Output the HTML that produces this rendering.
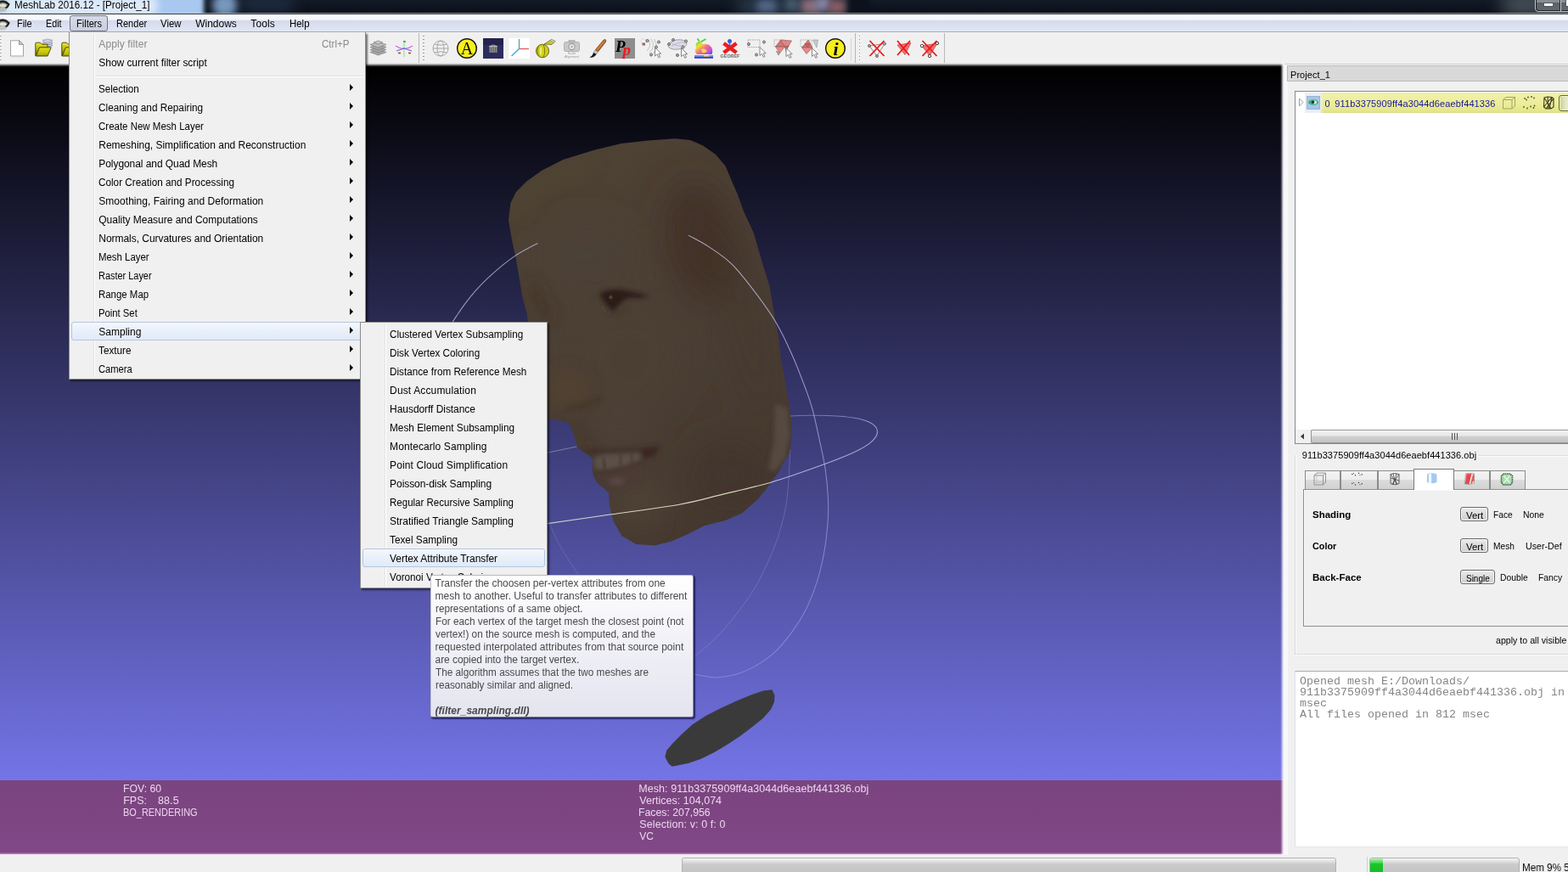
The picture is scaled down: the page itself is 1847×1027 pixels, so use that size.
<!DOCTYPE html>
<html lang="en">
<head>
<meta charset="utf-8">
<title>MeshLab 2016.12 - [Project_1]</title>
<style>
*{box-sizing:border-box;margin:0;padding:0}
html,body{width:1847px;height:1027px;overflow:hidden;background:#f0f0f0}
body{position:relative;font-family:"Liberation Sans",sans-serif;font-size:12px;color:#000;line-height:1}
.abs,.abs>*,.t,.p,#info>*,.menu>*,#tip>*{position:absolute}
.t{white-space:nowrap;transform-origin:0 0}
#title{left:0;top:0;width:1847px;height:16px;background:linear-gradient(#121a27,#0b1019);overflow:hidden}
#title .glow{left:-30px;top:-14px;width:270px;height:44px;background:#a8c8f0;filter:blur(2.5px)}
#title .glow2{left:2px;top:-6px;width:184px;height:26px;background:rgba(255,255,255,.62);filter:blur(5px);border-radius:12px}
#title .txt{left:16px;top:-2px;font-size:12px;line-height:14px;letter-spacing:-0.14px;color:#000}
#tline{left:0;top:15px;width:1847px;height:2px;background:linear-gradient(rgba(190,200,215,.62) 0,rgba(190,200,215,.62) 1px,#3a3e44 1px,#3a3e44 2px)}
#menubar{left:0;top:17px;width:1847px;height:21px;background:linear-gradient(#ffffff 0,#f9fafd 3px,#eff2fa 6.5px,#d5daec 7.5px,#dbe0f0 13px,#e1e6f4 20px);border-bottom:1px solid #a9abb5}
#menubar .t{top:0;height:20px;line-height:21px}
#mfil{left:82px;top:1px;width:45px;height:19px;border:1px solid #6e7482;border-radius:3px;background:linear-gradient(#d6dbe8,#c9cfdf)}
#toolbar{left:0;top:38px;width:1847px;height:38px;background:linear-gradient(#f8f8f8 0,#f0f0f0 1px)}
#gl{left:0;top:74px;width:1513px;height:934px;overflow:hidden;background:#000}
#info{left:0;top:845px;width:1513px;height:89px;background:linear-gradient(#7a4480,#7d4682 50%,#814888)}
#info .t{color:#e4dbe9;font-size:12.5px;line-height:14px}
#right{left:1510px;top:76px;width:337px;height:931px}
#status{left:0;top:1006px;width:1847px;height:21px}
.menu{background:#f0f0f0;border:1px solid #8c8c8c;box-shadow:2px 2px 2px rgba(0,0,0,.55)}
.menu .gut{left:28px;top:2px;bottom:2px;width:2px;border-left:1px solid #e2e3e3;border-right:1px solid #fff}
.menu .it{left:34px;height:22px;line-height:23px;white-space:nowrap}
.menu .ar{width:0;height:0;border-left:4.6px solid #000;border-top:4.3px solid transparent;border-bottom:4.3px solid transparent}
.menu .hl{height:22px;border:1px solid #b3c6e2;border-radius:3px;background:linear-gradient(#f4f7fc,#e9f0fa 50%,#e0eaf8)}
#tip{left:506.5px;top:677.3px;width:310px;height:168px;border:1px solid #fbfbfd;border-color:#b9b9c4 #8e8ea0 #77778c #c4c4d0;border-radius:3px;background:linear-gradient(#ffffff,#f4f4f9 35%,#e3e4ef);box-shadow:1.5px 1.5px 1.5px rgba(10,10,60,.7);color:#4a4a4a}
#tip .t{left:4px;line-height:15px;height:15px}
.b11{font-size:11px;line-height:13px;letter-spacing:.2px}
.mono{font-family:"Liberation Mono",monospace;font-size:13.33px;line-height:13px;color:#7a7a7a}
.tab{border:1px solid #8c8c8c;border-bottom:none;background:linear-gradient(#f3f3f3 0,#ededed 44%,#dcdcdc 47%,#d0d0d0 100%)}
.btn{border:1px solid #6a6a6a;border-radius:3px;background:linear-gradient(#ececec,#dadada 50%,#d0d0d0);box-shadow:inset 0 0 0 1px #f6f6f6}
.pb{border:1px solid #b2b2b2;border-radius:3px;background:linear-gradient(#f4f4f4 0,#dedede 4px,#cacaca 7px,#c4c4c4 100%)}
</style>
</head>
<body>
<div id="root" style="position:absolute;left:0;top:0;width:1847px;height:1027px;will-change:transform">
<div id="title" class="abs"><div class="glow"></div>
<div style="left:250px;top:-8px;width:30px;height:28px;border-radius:14px;background:#7d9fc6;filter:blur(5px);opacity:.95"></div>
<div style="left:285px;top:-6px;width:60px;height:20px;background:#1e2c40;filter:blur(8px)"></div>
<div style="left:870px;top:-4px;width:130px;height:22px;background:#2a3a4a;filter:blur(9px)"></div>
<div style="left:892px;top:0px;width:22px;height:14px;background:#566a8c;filter:blur(5px)"></div>
<div style="left:926px;top:-2px;width:14px;height:14px;background:#4a6074;filter:blur(5px)"></div>
<div style="left:944px;top:-2px;width:22px;height:18px;background:#8e6e7c;filter:blur(5px)"></div>
<div style="left:962px;top:-4px;width:16px;height:16px;background:#8c8eb2;filter:blur(5px)"></div>
<div style="left:976px;top:0px;width:20px;height:16px;background:#8e5e64;filter:blur(5px)"></div>
<div style="left:1000px;top:-10px;width:24px;height:40px;background:#0c121b;filter:blur(3px)"></div>
<div style="left:1770px;top:-10px;width:90px;height:30px;background:#454d56;filter:blur(10px)"></div>
<div class="glow2"></div>
<svg style="left:0;top:0" width="12" height="16" viewBox="0 0 12 16"><ellipse cx="3" cy="5.500" rx="7.500" ry="5.500" fill="#767a72"/><ellipse cx="3.500" cy="6.500" rx="4" ry="2.200" fill="#dde1d4"/><path d="M-2 3.500 Q4 -0.500 10.500 5 Q9 9 6 10" stroke="#1c1c1c" stroke-width="2" fill="none"/><ellipse cx="2" cy="11" rx="6" ry="2.500" fill="#b8bcb4"/></svg>
<div class="t" style="left:16.80px;top:-2px;font-size:12px;line-height:16px;transform:scaleX(0.9721);">MeshLab 2016.12 - [Project_1]</div>
<div style="left:1808px;top:-6px;width:50px;height:20px;border:1px solid #c8ccd2;border-radius:4px;background:#1a1e24"></div>
<div style="left:1810px;top:-6px;width:48px;height:18px;border-radius:3px;background:linear-gradient(#8a9098 0,#868c94 9px,#5a6068 9px,#62686f 100%)"></div>
<div style="left:1818px;top:3px;width:12px;height:5px;background:#fff;border:1px solid #50565c"></div>
<div style="left:1837px;top:-6px;width:2px;height:19px;background:linear-gradient(90deg,#2a2e34 0,#2a2e34 1px,#c8ccd2 1px)"></div>
<div style="left:1844px;top:-2px;width:6px;height:10px;background:#fff;border:1px solid #50565c"></div>
</div>
<div id="tline" class="abs"></div>
<div id="menubar" class="abs">
<svg style="left:0;top:0" width="12" height="20" viewBox="0 0 12 20"><ellipse cx="3" cy="10.500" rx="7.500" ry="5.500" fill="#80847c"/><ellipse cx="3.500" cy="11.500" rx="4" ry="2.200" fill="#e3e6dc"/><path d="M-2 8.500 Q4 4.500 10.500 10 Q9 14 6 15" stroke="#1c1c1c" stroke-width="2" fill="none"/><ellipse cx="2" cy="16" rx="6" ry="2.500" fill="#c4c8c2"/></svg>
<div id="mfil"></div>
<div class="t" style="left:19.50px;top:3px;font-size:12px;line-height:16px;transform:scaleX(0.9104);">File</div><div class="t" style="left:53.60px;top:3px;font-size:12px;line-height:16px;transform:scaleX(0.8996);">Edit</div><div class="t" style="left:89.70px;top:3px;font-size:12px;line-height:16px;transform:scaleX(0.9184);">Filters</div><div class="t" style="left:136.70px;top:3px;font-size:12px;line-height:16px;transform:scaleX(0.9197);">Render</div><div class="t" style="left:189.20px;top:3px;font-size:12px;line-height:16px;transform:scaleX(0.9492);">View</div><div class="t" style="left:230.30px;top:3px;font-size:12px;line-height:16px;letter-spacing:-0.030px;">Windows</div><div class="t" style="left:295.30px;top:3px;font-size:12px;line-height:16px;letter-spacing:0.122px;">Tools</div><div class="t" style="left:340.80px;top:3px;font-size:12px;line-height:16px;transform:scaleX(0.9518);">Help</div>
</div>
<div id="toolbar" class="abs">
<svg class="p" style="left:0;top:0" width="1847" height="40" viewBox="0 38 1847 40" font-family="'Liberation Serif',serif">
<defs>
<pattern id="hd" x="0" y="42" width="3" height="4" patternUnits="userSpaceOnUse"><rect x="0" y="0" width="2" height="1.300" fill="#9c9c9c"/><rect x="0" y="1.300" width="2" height="1" fill="#fdfdfd"/></pattern>
<linearGradient id="fol" x1="0" y1="0" x2="0" y2="1"><stop offset="0" stop-color="#ecec28"/><stop offset=".5" stop-color="#b8b810"/><stop offset="1" stop-color="#5e5e06"/></linearGradient>
<linearGradient id="rb" x1="0" y1="0" x2="1" y2="1"><stop offset="0" stop-color="#3ad23a"/><stop offset=".3" stop-color="#f0e030"/><stop offset=".55" stop-color="#f06a9a"/><stop offset=".8" stop-color="#c050e0"/><stop offset="1" stop-color="#4050e0"/></linearGradient>
<g id="cur"><path d="M0 0 L0 10 L2.5 7.800 L4.300 11.800 L6 11 L4.200 7.200 L7.200 7.200 Z" fill="#fff" stroke="#777" stroke-width=".9"/></g>
<g id="pt"><circle r="1.500" fill="#b9b9b9" stroke="#555" stroke-width=".9"/></g>
<linearGradient id="fol2" x1="0" y1="0" x2="0" y2="1"><stop offset="0" stop-color="#dede1a"/><stop offset=".6" stop-color="#c4c40e"/><stop offset="1" stop-color="#a2a206"/></linearGradient></defs>
<rect x="0" y="42" width="1.500" height="30" fill="url(#hd)"/>
<!-- new doc -->
<path d="M12.500 47.500 H22.500 L27.500 52.500 V66 H12.500 Z" fill="#fefefe" stroke="#a4a4a4"/><path d="M13 48.200 H22" stroke="#dcdcdc" stroke-width="1.200"/><path d="M22.500 47.500 V52.500 H27.500 Z" fill="#c4c4c4" stroke="#8a8a8a" stroke-width=".8"/><path d="M13 66.800 H28" stroke="#d0d0d0"/>
<!-- folder 1 -->
<g><path d="M50 47.500 l6 -1.500 l6 1.500 l-6 1.600 Z" fill="#dcdce8" stroke="#8a8aa2" stroke-width=".7"/><path d="M50 49.500 l6 1.600 l6 -1.600 M50 51.500 l6 1.600 l6 -1.600 M50 53.500 l6 1.600 l6 -1.600" fill="none" stroke="#7c7c98" stroke-width="1"/><path d="M41.800 51.200 Q41.800 50.200 43 50.200 H47.500 L49.500 52.200 H56 V65.700 H41.800 Z" fill="url(#fol)" stroke="#3e3e04" stroke-width=".9"/><path d="M46.500 55.800 H60.300 L56 65.900 H42.300 Z" fill="url(#fol2)" stroke="#3e3e04" stroke-width=".9"/></g>
<g><path d="M72.800 51.200 Q72.800 50.200 74 50.200 H78.500 L80.500 52.200 H87 V65.700 H72.800 Z" fill="url(#fol)" stroke="#3e3e04" stroke-width=".9"/><path d="M77.500 55.800 H91.300 L87 65.900 H73.300 Z" fill="url(#fol2)" stroke="#3e3e04" stroke-width=".9"/></g>
<!-- layers -->
<g fill="#a6a6a6" stroke="#7e7e7e" stroke-width=".7"><path d="M436 61.500 l9.500 -3 l9.500 3 l-9.500 3.500 Z"/><path d="M436 58.500 l9.500 -3 l9.500 3 l-9.500 3.500 Z"/><path d="M436 55.500 l9.500 -3 l9.500 3 l-9.500 3.500 Z"/><path d="M436 52.500 l9.500 -3 l9.500 3 l-9.500 3.500 Z" fill="#bdbdbd"/><path d="M440 50 l5.500 -2 l5.500 2 l-5.500 2 Z" fill="#c8c8c8"/></g>
<!-- axis small -->
<g fill="none" stroke-width="1.200"><path d="M476 47.500 V67" stroke="#9be09b"/><path d="M466 54 Q476 61 486 54" stroke="#d06ad0"/><path d="M467 60 L476 57 L485 60" stroke="#6a6ae0"/><path d="M469 62.500 h3 M481 62.500 h3" stroke="#c03030" stroke-width="1.600"/><path d="M475 49 h3" stroke="#2a7a2a"/></g>
<path d="M493.500 39 V76" stroke="#b8b8b8"/>
<rect x="498" y="42" width="2" height="30" fill="url(#hd)"/>
<!-- globe -->
<g fill="none" stroke="#a8a8a8" stroke-width="1"><circle cx="519" cy="57" r="9"/><ellipse cx="519" cy="57" rx="4" ry="9"/><path d="M510 57 H528 M511.500 52 Q519 54.500 526.500 52 M511.500 62 Q519 59.500 526.500 62"/></g>
<!-- A -->
<circle cx="550" cy="57" r="11.300" fill="#f6ee1e" stroke="#111" stroke-width="1.400"/><text x="550" y="64" font-size="20" text-anchor="middle" fill="#000">A</text>
<!-- dark square -->
<rect x="569" y="45" width="24" height="24" fill="#2d2c5e"/><rect x="569" y="45" width="24" height="8" fill="#24234e"/><path d="M576.500 62 V54.500 Q581 50.500 585.500 54.500 V62 Z" fill="#8c8c86"/><path d="M578.500 62 V56 M581 62 V55 M583.500 62 V56" stroke="#5a5a58" stroke-width=".9"/><path d="M576 54.500 H586" stroke="#b4b4ac" stroke-width="1.200"/>
<!-- axes -->
<rect x="599.500" y="45" width="24.500" height="24" fill="#fff"/><path d="M611.500 57.500 V46" stroke="#46b478" stroke-width="1.300"/><path d="M611.500 57.500 H623" stroke="#e0646e" stroke-width="1.500"/><path d="M611.500 57.500 L602.500 66" stroke="#4aa4d8" stroke-width="1.500"/>
<!-- tape -->
<g><path d="M641 52 L649.500 46.500 L654 48.500 L650 52.500 Z" fill="#c8c832" stroke="#5c5c10" stroke-width=".7"/><path d="M649.500 46.500 L654 48.500 L653.200 50 L648.500 48 Z" fill="#e8e8e8" stroke="#777" stroke-width=".5"/><ellipse cx="639" cy="60" rx="7.500" ry="7.800" fill="#d2d21e" stroke="#56560c" stroke-width=".9"/><path d="M635 53.500 Q631 60 635 66.500 M640 52.500 Q643.500 60 640 67.500" fill="none" stroke="#7a7a10" stroke-width="1"/><path d="M637 56 V64" stroke="#f4f48c" stroke-width="1.600"/></g>
<!-- camera -->
<g><rect x="664.500" y="49.500" width="18" height="11" rx="2" fill="#c9c9c9" stroke="#a2a2a2" stroke-width=".8"/><rect x="670" y="47.500" width="7" height="2.500" fill="#bcbcbc" stroke="#a2a2a2" stroke-width=".6"/><circle cx="673.500" cy="55" r="3.600" fill="#ececec" stroke="#9a9a9a" stroke-width="1.100"/><circle cx="673.500" cy="55" r="1.500" fill="#b5b5b5"/><text x="673.500" y="64" font-family="'Liberation Sans',sans-serif" font-size="3.800" text-anchor="middle" fill="#999">Scale</text><text x="673.500" y="68" font-family="'Liberation Sans',sans-serif" font-size="3.800" text-anchor="middle" fill="#999">Alignment</text></g>
<!-- brush -->
<g><path d="M713 46.500 Q714.500 47.500 713.500 49.500 L704.500 61 L701 59 L710.500 47.500 Q712 46 713 46.500 Z" fill="#b0682c" stroke="#6e3c14" stroke-width=".6"/><path d="M701 59 L704.500 61 L702.500 64 L699 62 Z" fill="#c4c4c4" stroke="#777" stroke-width=".5"/><path d="M699 62 L702.500 64 Q699.500 68.500 694.500 67.500 Q698 66 699 62 Z" fill="#161616"/><path d="M711.500 48.500 L703.500 58.500" stroke="#e0a060" stroke-width=".9"/></g>
<!-- Pp -->
<rect x="724" y="45" width="24" height="24" fill="#8e8e8e"/><text x="725" y="61" font-size="19" font-weight="bold" font-style="italic" fill="#000">P</text><text x="733.500" y="65" font-size="19" font-weight="bold" font-style="italic" fill="#e61c1c">p</text>
<!-- select points -->
<g fill="none" stroke="#bcbcbc" stroke-width=".9"><path d="M763 46 Q769 52 762 60"/><path d="M766.500 45.500 Q773.500 53 765 62.500"/><path d="M770.500 46 Q777 54.500 768 65"/></g>
<circle cx="758" cy="48.500" r="2.800" fill="#f4f4f4" stroke="#c8c8c8" stroke-width=".6"/><rect x="756.500" y="50.500" width="3.500" height="3" fill="#b06060"/><use href="#pt" x="762.500" y="48"/><use href="#pt" x="776" y="49.500"/><use href="#pt" x="773" y="55.500"/><use href="#pt" x="767" y="64.500"/><use href="#cur" x="771.500" y="56"/>
<!-- ellipse select -->
<ellipse cx="798" cy="52.500" rx="11" ry="5.600" fill="#dcdcee" stroke="#9a9a9a" stroke-width=".9" transform="rotate(-8 798 52.500)"/><path d="M790 50 Q798 56 806 53 M791 55 Q798 49 807 50" fill="none" stroke="#aaa" stroke-width=".7"/><use href="#pt" x="788" y="52"/><use href="#pt" x="793" y="47"/><use href="#pt" x="808" y="48.500"/><use href="#pt" x="804.500" y="55.500"/><use href="#pt" x="798" y="65"/><use href="#cur" x="802.500" y="56.500"/>
<!-- bunny -->
<g><path d="M821 50 L825.500 48 L828 52 Q834 50.500 837.500 55 Q840.500 59 838.500 64 H820.500 Q817.500 60 820 56 Q819 52 821 50 Z" fill="url(#rb)"/><path d="M823.500 48.500 L821.500 45.500 M826 49 L831.500 46" stroke="#3ad23a" stroke-width="1.600"/><path d="M826 58 Q830 56 833 60 Q831 63 827 62" fill="#f4e430" opacity=".9"/><rect x="818" y="65" width="22" height="1.600" fill="#28b4c8"/><rect x="818" y="66.600" width="22" height="2.200" fill="#3838d8"/><rect x="829" y="65" width="6" height="1.600" fill="#f0d020"/></g>
<!-- georef -->
<g><path d="M852.500 51 L867.500 62 M867.500 51 L852.500 62" stroke="#ee1c1c" stroke-width="4.600"/><circle cx="859.500" cy="48.500" r="2.500" fill="#3a5ad8"/><path d="M859.500 50.500 V55" stroke="#3a5ad8" stroke-width="1.600"/><text x="860" y="68.300" font-family="'Liberation Sans',sans-serif" font-size="5.400" font-weight="bold" text-anchor="middle" fill="#666">GEOREF</text></g>
<!-- rect select -->
<rect x="881" y="47" width="14" height="8.500" fill="none" stroke="#8c8c8c" stroke-width=".9" stroke-dasharray="1.300 1.300"/><use href="#pt" x="882" y="52"/><use href="#pt" x="900" y="49.500"/><use href="#pt" x="891" y="64.500"/><use href="#cur" x="895" y="55.500"/>
<!-- tri select 1 -->
<g stroke="#8c5050" stroke-width=".6"><path d="M913.500 55 L919.500 47 L924.500 55 Z" fill="#e46e6e"/><path d="M919.500 47 L932.500 48 L929 54 L924.500 55 Z" fill="#e88484"/><path d="M913.500 55 L924.500 55 L918.500 62.500 Z" fill="#e88a8a"/><path d="M924.500 55 L929 54 L926 61 Z" fill="#d45c5c"/><path d="M914.500 60 L918.500 62.500 L917 65 Z" fill="#a8b8b8"/></g><rect x="912" y="47" width="13" height="8" fill="none" stroke="#8c8c8c" stroke-width=".8" stroke-dasharray="1.300 1.300"/><use href="#cur" x="926" y="56.500"/>
<!-- tri select 2 -->
<g stroke="#8c5050" stroke-width=".6"><path d="M944.500 56 L952 47 L957 56 Z" fill="#e46e6e"/><path d="M944.500 56 L957 56 L950 63.500 Z" fill="#e88a8a"/><path d="M948.200 51.500 L954.500 51.500 L951 56 Z" fill="#d45c5c"/><path d="M957.500 47 L963.500 47 L962 56 Z" fill="#c4cccc" stroke="#8a9a9a"/></g><rect x="943" y="47" width="13" height="8" fill="none" stroke="#8c8c8c" stroke-width=".8" stroke-dasharray="1.300 1.300"/><use href="#cur" x="956.500" y="56.500"/>
<!-- i -->
<circle cx="984" cy="57" r="11.300" fill="#f6ee1e" stroke="#111" stroke-width="1.400"/><text x="984.500" y="64.500" font-size="22" font-weight="bold" font-style="italic" text-anchor="middle" fill="#000">i</text>
<path d="M1002.500 45 V71" stroke="#d4d4d4"/><path d="M1007.500 39 V76" stroke="#b8b8b8"/>
<rect x="1012" y="42" width="2" height="30" fill="url(#hd)"/>
<!-- delete icons -->
<g><path d="M1024 54 L1033 66 L1042 51.500 Z" fill="none" stroke="#8a6a6a" stroke-width=".8"/><use href="#pt" x="1024" y="54"/><use href="#pt" x="1033" y="66"/><use href="#pt" x="1042" y="51.500"/><path d="M1024.500 48 L1041.500 66 M1041.500 48 L1024.500 66" stroke="#ee1414" stroke-width="1.800"/></g>
<g><path d="M1057 53 L1073 50.500 L1066 64.500 Z" fill="#f07070" stroke="#b44" stroke-width=".7"/><path d="M1057 48 L1071 65 M1072 48 L1057 65" stroke="#ee1414" stroke-width="1.800"/></g>
<g><path d="M1086 54 L1104 51 L1095 66 Z" fill="#f07070" stroke="#b44" stroke-width=".7"/><circle cx="1086" cy="54" r="1.700" fill="#fff" stroke="#333" stroke-width=".9"/><circle cx="1104" cy="51" r="1.700" fill="#fff" stroke="#333" stroke-width=".9"/><circle cx="1095" cy="66" r="1.700" fill="#fff" stroke="#333" stroke-width=".9"/><path d="M1086.500 48 L1103.500 66 M1103.500 48 L1086.500 66" stroke="#ee1414" stroke-width="1.800"/></g>
<path d="M1112.500 39 V76" stroke="#b8b8b8"/>
</svg>

</div>
<div id="gl" class="abs">
<svg style="left:0;top:-74px" width="1513" height="1083" viewBox="0 0 1513 1083">
<defs>
<linearGradient id="bg" x1="0" y1="77" x2="0" y2="1006" gradientUnits="userSpaceOnUse"><stop offset="0" stop-color="#000000"/><stop offset="1" stop-color="#8080ff"/></linearGradient>
<linearGradient id="fg" x1="620" y1="200" x2="900" y2="600" gradientUnits="userSpaceOnUse"><stop offset="0" stop-color="#4e4234"/><stop offset=".5" stop-color="#4b3f35"/><stop offset="1" stop-color="#453930"/></linearGradient>
<clipPath id="fc"><path id="fp" d="M599 259 L601.5 239 L608 226 L620.5 213.5 L638 201 L663.5 188 L699 177 L732 169 L767 165.3 L795 163.3 L813 165 L828 171.6 L843 182 L854.7 195.7 L861 211 L868.6 228.6 L876 249 L887.6 274 L896.5 304.5 L906.6 337.5 L911.6 368 L917.6 400 L920 424.3 L924.9 448.7 L929.7 477.9 L932.2 497.4 L931 531.5 L922.4 546.1 L917.6 555.8 L907.8 568 L903 575.3 L893.2 587.5 L873.7 604.5 L854.3 613 L829.9 619.1 L810.4 628.9 L791 637.4 L771.5 642.3 L749.6 641 L732.5 631.3 L722.8 614.3 L717.9 594.8 L717.1 580.2 L711.7 575.5 L703.9 569.3 L699.2 561.5 L697.6 552.1 L698.4 542.8 L696 538.1 L686.7 531.9 L680.5 527.2 L678.2 519.4 L673.5 505.4 L669.6 497.6 L645.5 493 L630 485 L622 430 L624 395 L620.5 368 L615.4 350 L611.6 327.3 L607.8 304.5 L602.8 281.8 Z"/></clipPath>
<filter id="b8" x="-50%" y="-50%" width="200%" height="200%"><feGaussianBlur stdDeviation="8"/></filter>
<filter id="b20" x="-50%" y="-50%" width="200%" height="200%"><feGaussianBlur stdDeviation="20"/></filter>
<filter id="b3" x="-50%" y="-50%" width="200%" height="200%"><feGaussianBlur stdDeviation="2.5"/></filter>
<filter id="b1" x="-50%" y="-50%" width="200%" height="200%"><feGaussianBlur stdDeviation="1"/></filter>
</defs>
<rect x="0" y="70" width="1513" height="940" fill="url(#bg)"/>
<!--TRACKBACK-->
<g clip-path="url(#fc)">
<rect x="580" y="150" width="380" height="520" fill="url(#fg)"/>
<g filter="url(#b20)">
<ellipse cx="826" cy="285" rx="42" ry="75" fill="#3f3026" opacity=".85" transform="rotate(-12 826 285)"/>
<ellipse cx="880" cy="380" rx="26" ry="120" fill="#42352b" opacity=".6" transform="rotate(-10 880 380)"/>
<ellipse cx="740" cy="420" rx="70" ry="70" fill="#4b3e35" opacity=".7"/>
<ellipse cx="690" cy="300" rx="60" ry="40" fill="#4c4036" opacity=".6"/>
<ellipse cx="860" cy="560" rx="50" ry="45" fill="#41342b" opacity=".8"/>
<ellipse cx="770" cy="628" rx="50" ry="14" fill="#41352b" opacity=".7"/>
<ellipse cx="752" cy="596" rx="30" ry="26" fill="#54483b" opacity=".75"/>
<ellipse cx="730" cy="505" rx="34" ry="20" fill="#51453a" opacity=".6"/>
</g>
<g filter="url(#b8)">
<ellipse cx="668" cy="458" rx="26" ry="24" fill="#514130" opacity=".8"/>
<path d="M600 240 L615 215 L660 192 L700 180 L700 200 L640 225 L615 260 Z" fill="#4e4233" opacity=".6"/>
<path d="M640 498 L672 500 L690 530 L700 545 L690 520 L650 505 Z" fill="#3c3026" opacity=".5"/>
<path d="M628 330 Q640 350 652 372 L640 378 Q630 355 622 335 Z" fill="#3e2f25" opacity=".7"/>
</g>
<g filter="url(#b3)">
<path d="M913 476 L927 480 L930.500 512 L925 540 L912 556 L905 552 L912 520 Z" fill="#574b42" opacity=".95"/>
<path d="M668 482 Q690 478 707 470" stroke="#3e3025" stroke-width="4" fill="none" opacity=".7"/>
<path d="M706 346 Q718 339 733 341.500 Q748 343.500 764 349 L756 351 Q744 350 736 352 L722 367 L715 360 L707 349 Z" fill="#2a1b15" opacity=".9"/>
<ellipse cx="726" cy="351" rx="10" ry="7" fill="#2a1c17" opacity=".85"/>
<path d="M718 366 Q728 372 740 362" stroke="#3d2f2c" stroke-width="4" fill="none" opacity=".5"/>
<path d="M688 531 Q730 533 777 527" stroke="#3c2a24" stroke-width="3.500" fill="none" opacity=".9"/>
<path d="M699 540 L710 535.500 L752 533.500 L756 541 L735 549 L712 553.500 L701 553 Z" fill="#5b4f46"/>
<path d="M756 528 L776 527 L772 537 L757 541 Z" fill="#3c2523"/>
<path d="M700 555.500 Q722 556 757 543" stroke="#3f2d29" stroke-width="2.500" fill="none"/>
<path d="M702 559 L735 553 L756 546 L752 566 L730 577 L714 577 Z" fill="#4c3a36"/>
<ellipse cx="727" cy="567" rx="10" ry="4.500" fill="#564742"/>
</g>
<g filter="url(#b1)">
<circle cx="719.500" cy="350" r="1.600" fill="#7e7066"/>
<path d="M709.500 360 L714 368" stroke="#5a4c42" stroke-width="1.200"/>
<path d="M710.500 539 Q713 546 712 553 M731 535 V548 M744 534 V545" stroke="#3e302b" stroke-width="1.300" opacity=".8"/>
</g>

</g>
<defs><linearGradient id="bgr" x1="0" y1="280" x2="0" y2="800" gradientUnits="userSpaceOnUse"><stop offset="0" stop-color="#cdc4e0" stop-opacity=".8"/><stop offset=".2" stop-color="#c4bce4" stop-opacity=".8"/><stop offset=".35" stop-color="#b4b0e4" stop-opacity=".75"/><stop offset=".6" stop-color="#b4b0ea" stop-opacity=".6"/><stop offset="1" stop-color="#b8b4ee" stop-opacity=".4"/></linearGradient><linearGradient id="cg" x1="640" y1="0" x2="1034" y2="0" gradientUnits="userSpaceOnUse"><stop offset="0" stop-color="#d8dcdc" stop-opacity=".85"/><stop offset=".18" stop-color="#e6e8cc" stop-opacity=".9"/><stop offset=".66" stop-color="#e6e8cc" stop-opacity=".9"/><stop offset=".72" stop-color="#c4c4ee" stop-opacity=".85"/><stop offset="1" stop-color="#b8b8ea" stop-opacity=".8"/></linearGradient><linearGradient id="cg2" x1="1034" y1="0" x2="931" y2="0" gradientUnits="userSpaceOnUse"><stop offset="0" stop-color="#b8b8ea" stop-opacity=".8"/><stop offset=".25" stop-color="#a4a4dc" stop-opacity=".7"/><stop offset="1" stop-color="#9494cc" stop-opacity=".6"/></linearGradient></defs>
<g fill="none" stroke-linecap="round">
<path d="M633.1 286.7 C631.0 287.8 625.1 290.7 620.6 293.2 C616.1 295.7 611.1 298.4 606.3 301.6 C601.5 304.8 597.2 308.0 592.0 312.3 C586.8 316.6 580.3 322.1 575.0 327.2 C569.7 332.3 564.6 337.5 560.0 342.7 C555.4 347.9 551.2 353.2 547.5 358.1 C543.8 363.1 540.5 368.1 537.6 372.4 C534.7 376.7 531.3 382.1 530.0 384.0" stroke="#b9acd0" stroke-width="1.05" opacity=".85"/>
<path d="M811.4 277.4 C815.2 279.6 826.1 284.8 834.5 290.4 C842.9 296.0 852.7 302.0 861.8 310.9 C870.9 319.8 880.4 332.2 889.0 343.6 C897.6 355.0 906.3 366.7 913.6 379.0 C920.9 391.3 926.8 404.0 932.7 417.2 C938.6 430.4 945.0 447.2 949.0 458.0 C953.0 468.8 954.2 471.7 957.0 482.0 C959.8 492.3 963.1 507.9 965.6 519.7 C968.1 531.5 970.6 541.2 972.2 552.8 C973.9 564.4 975.1 578.3 975.5 589.3 C975.9 600.3 975.6 608.5 974.8 619.0 C974.0 629.5 972.6 641.2 970.5 652.2 C968.4 663.2 965.9 674.3 962.3 685.3 C958.7 696.3 954.0 708.5 949.0 718.4 C944.0 728.3 938.6 736.6 932.5 744.9 C926.4 753.2 919.8 761.5 912.6 768.1 C905.4 774.7 897.1 780.2 889.4 784.6 C881.7 789.0 873.9 792.4 866.2 794.6 C858.5 796.8 850.7 797.9 843.0 797.9 C835.3 797.9 827.1 796.1 819.9 794.6 C812.7 793.1 803.3 789.9 800.0 789.0" stroke="url(#bgr)" stroke-width="1.05"/>
<path d="M640.0 617.3 C641.1 617.1 633.7 618.3 646.8 616.4 C659.9 614.5 692.9 609.7 718.4 606.0 C743.9 602.3 778.1 598.1 800.0 594.2 C821.9 590.3 831.5 587.0 849.7 582.6 C867.9 578.2 888.9 573.8 909.3 567.7 C929.7 561.6 956.2 552.0 972.2 546.2 C988.2 540.4 996.5 537.1 1005.3 533.0 C1014.1 528.9 1020.5 525.3 1025.2 521.4 C1029.9 517.5 1032.9 513.4 1033.4 509.8" stroke="url(#cg)" stroke-width="1.1"/>
<path d="M1033.4 509.8 C1034.0 506.2 1032.1 502.7 1028.5 499.9 C1024.9 497.1 1019.1 494.9 1011.9 493.2 C1004.7 491.5 994.8 490.5 985.4 489.9 C976.0 489.2 964.6 489.3 955.6 489.3 C946.6 489.3 935.5 489.8 931.5 489.9" stroke="url(#cg2)" stroke-width="1.05"/>
<path d="M644.0 533.4 C646.7 532.8 654.2 531.2 660.0 530.0 C665.8 528.8 675.8 526.7 679.0 526.0" stroke="#c8cce0" stroke-width="1" opacity=".45"/>
<path d="M930.8 529.7 C930.5 535.2 929.9 551.8 929.1 562.8 C928.3 573.8 927.7 584.9 925.8 595.9 C923.9 606.9 920.8 618.5 917.5 629.0 C914.2 639.5 910.7 648.3 906.0 658.8 C901.3 669.3 896.0 680.9 889.4 691.9 C882.8 702.9 873.9 715.1 866.2 725.0 C858.5 734.9 850.7 743.8 843.0 751.5 C835.3 759.2 827.1 765.6 819.9 771.4 C812.7 777.1 803.3 783.6 800.0 786.0" stroke="#b0acd8" stroke-width="1" opacity=".3"/>
<path d="M643.0 610.0 C643.6 611.0 644.0 610.4 646.8 616.0 C649.6 621.6 654.9 634.4 660.0 643.6 C665.1 652.8 672.5 663.6 677.5 671.0 C682.5 678.4 687.9 685.2 690.0 688.0" stroke="#b0acd8" stroke-width="1" opacity=".25"/>
</g>

<path d="M783.4 891.3 L785.3 883.7 L793 874.8 L803 864.7 L815.7 853.3 L831 843.2 L848.6 834.3 L867.6 825.4 L886.6 817.8 L899.2 813.4 L909.4 812.2 L912.5 819.1 L912 826.7 L908 835.6 L899 845.7 L886.6 855.8 L871.4 867.2 L856.2 877.3 L841 886.2 L825.8 893.8 L810.6 898.9 L798 901.4 L791.6 902.7 L787.2 898.9 Z" fill="#3b3a3b"/>
</svg>
<div id="info">
<div class="t" style="left:145.22px;top:2px;font-size:12.5px;line-height:16px;transform:scaleX(0.9772);color:#ecd6ee">FOV: 60</div><div class="t" style="left:145.20px;top:16px;font-size:12.5px;line-height:16px;color:#ecd6ee">FPS:</div><div class="t" style="left:186.00px;top:16px;font-size:12.5px;line-height:16px;letter-spacing:0.108px;color:#ecd6ee">88.5</div><div class="t" style="left:145.32px;top:30px;font-size:12.5px;line-height:16px;transform:scaleX(0.8759);color:#ecd6ee">BO_RENDERING</div><div class="t" style="left:752.30px;top:2px;font-size:12.5px;line-height:16px;letter-spacing:0.062px;color:#ecd6ee">Mesh: 911b3375909ff4a3044d6eaebf441336.obj</div><div class="t" style="left:753.30px;top:16px;font-size:12.5px;line-height:16px;letter-spacing:0.010px;color:#ecd6ee">Vertices: 104,074</div><div class="t" style="left:752.32px;top:30px;font-size:12.5px;line-height:16px;transform:scaleX(0.9822);color:#ecd6ee">Faces: 207,956</div><div class="t" style="left:753.30px;top:44px;font-size:12.5px;line-height:16px;letter-spacing:0.094px;color:#ecd6ee">Selection: v: 0 f: 0</div><div class="t" style="left:753.30px;top:58px;font-size:12px;line-height:16px;color:#ecd6ee">VC</div>
</div>
<div id="edges" style="left:0;top:0;width:1513px;height:934px">
<div class="p" style="left:0;top:0;width:1513px;height:5px;background:linear-gradient(#f0f0f0 0,rgba(240,240,240,.96) .5px,rgba(240,240,240,.8) 1.5px,rgba(240,240,240,.45) 2.7px,rgba(240,240,240,.12) 4px,rgba(240,240,240,0) 5px)"></div>
<div class="p" style="left:0;top:930px;width:1513px;height:4px;background:linear-gradient(rgba(200,170,200,0) 0,rgba(215,190,215,.5) 1.5px,#f3e9f3 2.6px,#f0f0f0 3.6px)"></div>
<div class="p" style="left:1507.5px;top:0;width:5.5px;height:934px;background:linear-gradient(90deg,rgba(244,244,250,0) 0,rgba(244,244,250,.15) 1px,rgba(244,244,250,.6) 2.4px,#f6f6fa 4px,#f6f6f6 5.5px)"></div>
</div>
</div>
<div id="right" class="abs">
<div class="p" id="dockline" style="left:3px;top:-1px;width:334px;height:2px;background:linear-gradient(#c9c9c9 0,#c9c9c9 1px,#fbfbfb 1px)"></div>
<div class="p" style="left:2.500px;top:1px;width:4px;height:930px;background:#f8f8f8"></div>
<div class="p" style="left:15px;top:460px;width:2px;height:235px;background:linear-gradient(90deg,#d8d8d8 0,#d8d8d8 1px,#fcfcfc 1px)"></div>
<div class="p" style="left:231px;top:459.5px;width:106px;height:2px;background:linear-gradient(#dcdcdc 0,#dcdcdc 1px,#fcfcfc 1px)"></div>

<div class="p" style="left:6px;top:1px;width:331px;height:19px;background:#d9d9d9;border:1px solid #b9b9b9;border-right:none"></div>
<div class="t" style="left:10.00px;top:5px;font-size:11px;line-height:14px;letter-spacing:0.056px;">Project_1</div>
<div class="p" id="tree" style="left:15px;top:31px;width:322px;height:416px;background:#fff;border:1px solid #828790;border-right:none">
 <div class="p" style="left:11px;top:1px;width:311px;height:24px;background:linear-gradient(#f1f1a9,#ecec98 60%,#e4e486);border-top:1px solid #eaeab0;border-bottom:1px solid #dcdc8c"></div>
 <div class="p" style="left:11px;top:1px;width:22px;height:24px;background:linear-gradient(90deg,#e9eef8 0,#e9eef8 80%,rgba(238,238,160,0))"></div>
 <svg class="p" style="left:3px;top:7px" width="8" height="11" viewBox="0 0 8 11"><path d="M1.5 1 L6 5.5 L1.5 10 Z" fill="#fff" stroke="#9a9a9a" stroke-width="1"/></svg>
 <div class="p" style="left:13px;top:5px;width:16px;height:16px;background:#a9c5e6;border:1px solid #98b4d6"></div>
 <svg class="p" style="left:13px;top:5px" width="16" height="16" viewBox="0 0 16 16"><ellipse cx="8" cy="7.5" rx="6" ry="3.3" fill="#3cae82"/><ellipse cx="9.5" cy="7.5" rx="2.6" ry="2" fill="#dff3ea"/><circle cx="7.6" cy="7.3" r="1.7" fill="#0d3b2a"/></svg>
 <div class="t" style="left:34.60px;top:7px;font-size:11px;line-height:14px;color:#1616a0">0</div><div class="t" style="left:46.30px;top:7px;font-size:11px;line-height:14px;letter-spacing:0.115px;color:#1616a0">911b3375909ff4a3044d6eaebf441336</div>
 <svg class="p" style="left:243px;top:4px" width="80" height="18" viewBox="0 0 80 18" fill="none" stroke="#8b8b50" stroke-width="1">
  <path d="M1.5 5.5 H12 V16 H1.5 Z M1.5 5.5 L5 2.5 H15.5 L12 5.5 M15.5 2.5 V13 L12 16" stroke="#a3a36a"/>
  <g stroke="none" fill="#55552a"><circle cx="27" cy="4" r=".9"/><circle cx="31" cy="2.5" r=".9"/><circle cx="35" cy="2" r=".9"/><circle cx="38" cy="3.5" r=".9"/><circle cx="29" cy="5.5" r=".9"/><circle cx="26" cy="14" r=".9"/><circle cx="30" cy="15.5" r=".9"/><circle cx="34" cy="13.5" r=".9"/><circle cx="37.5" cy="15" r=".9"/><circle cx="38.5" cy="12.5" r=".9"/></g>
  <path d="M50 3 L54 2 L59 2.5 L61 4 V14 L58 16 L52 16 L49.5 14 Z M50 3 L58 16 M61 4 L52 16 M54 2 L55 16 M59 2.5 L56 16 M49.5 14 L59 2.5" stroke="#3c3c1e" stroke-width="1.1"/>
 </svg>
 <div class="p" style="left:310px;top:4px;width:16px;height:19px;border:1px solid #66663a;border-radius:3px;background:linear-gradient(90deg,#c9cf8a,#e6ebd0 60%,#dfe6f4);box-shadow:inset 0 0 0 1px #f4f4c8"></div>
 <div class="p" style="left:0;top:398px;width:321px;height:16px;background:#f0f0f0"></div>
 <svg class="p" style="left:0;top:398px" width="18" height="16" viewBox="0 0 18 16"><path d="M10 4.5 L6 8 L10 11.5 Z" fill="#3a3a3a"/></svg>
 <div class="p" style="left:18px;top:398px;width:304px;height:16px;border:1px solid #979797;border-right:none;border-radius:2px 0 0 2px;background:linear-gradient(#f2f2f2 0,#e6e6e6 45%,#d0d0d0 50%,#c4c4c4 100%)"></div>
 <div class="p" style="left:184px;top:402px;width:8px;height:8px;background:repeating-linear-gradient(90deg,#555 0,#555 1px,transparent 1px,transparent 3px)"></div>
</div>
<div class="t" style="left:23.80px;top:453px;font-size:11px;line-height:14px;letter-spacing:0.058px;">911b3375909ff4a3044d6eaebf441336.obj</div>
<div class="p" id="tabs" style="left:0;top:0">
 <div class="p tab" style="left:27px;top:478px;width:42px;height:23px"></div>
 <div class="p tab" style="left:69px;top:478px;width:44px;height:23px"></div>
 <div class="p tab" style="left:112.5px;top:478px;width:43.500px;height:23px"></div>
 <div class="p tab" style="left:202px;top:478px;width:43px;height:23px"></div>
 <div class="p tab" style="left:245px;top:478px;width:42px;height:23px"></div>
 <div class="p" style="left:25px;top:499.5px;width:312px;height:162.5px;border:1px solid #8e8e8e;border-right:none;background:#f0f0f0;box-shadow:inset 1px 1px 0 #fafafa"></div>
 <div class="p" style="left:155px;top:476px;width:48px;height:25px;border:1px solid #7a7a7a;border-bottom:none;background:#fff"></div>
 <svg class="p" style="left:27px;top:478px" width="270" height="23" viewBox="1537 554 270 23" fill="none">
  <path d="M1548 560 H1558.500 V571 H1548 Z M1548 560 L1551 557 H1561.500 L1558.500 560 M1561.500 557 V568 L1558.500 571" stroke="#8a8a8a" stroke-width=".9"/><path d="M1551 557 V568 H1561.500 M1551 568 L1548 571" stroke="#b4b4b4" stroke-width=".6"/>
  <g fill="#3c3c3c"><circle cx="1592.800" cy="558.600" r=".75"/><circle cx="1596.500" cy="559.800" r=".75"/><circle cx="1600.500" cy="557.200" r=".75"/><circle cx="1604.300" cy="558.800" r=".75"/><circle cx="1602" cy="559.800" r=".6"/><circle cx="1594.500" cy="557.500" r=".6"/><circle cx="1592.800" cy="569.600" r=".75"/><circle cx="1596.500" cy="571" r=".75"/><circle cx="1600.500" cy="568.400" r=".75"/><circle cx="1604.300" cy="569.800" r=".75"/><circle cx="1602" cy="570.800" r=".6"/><circle cx="1594.500" cy="568.500" r=".6"/></g>
  <path d="M1638 558.500 Q1642.500 556.500 1648 558.500 V569.500 Q1643 572 1638 569.500 Z M1638 558.500 L1646 570.500 M1648 558.500 L1640 570.500 M1641 557.500 Q1644 564 1641 571 M1645 557.500 Q1642 564 1645 571 M1638 563 L1648 566" stroke="#3a3a3a" stroke-width=".75"/>
  <path d="M1681 558.500 Q1686.500 555.800 1692.500 558.500 V568 Q1686.500 570.500 1681 568 Z" fill="#a4c9ef"/><path d="M1684.500 557.500 V569" stroke="#f2f8fd" stroke-width="3.200"/><path d="M1681 558.500 Q1686.500 555.800 1692.500 558.500" stroke="#c8def4" stroke-width="1"/>
  <path d="M1726.500 558 Q1731 556.500 1736.500 558 L1736.500 569 Q1731.500 571.500 1725.500 570 Z" fill="#f6f2f2" stroke="#7c8a7c" stroke-width=".7"/><path d="M1727.500 558.300 L1733.500 558 L1730.500 570.200 L1725.800 569.800 Z" fill="#e34b4b"/><path d="M1735 558.500 L1736.300 559 L1736.300 566 L1733 569.800 L1732 569.800 Z" fill="#e34b4b" opacity=".9"/>
  <path d="M1771 558 L1779 558 L1781.500 560.500 V568.500 L1779 571 H1771 L1768.500 568.500 V560.500 Z" fill="#a8dcae" stroke="#243c28" stroke-width="1.600" stroke-dasharray="1.200 1"/><path d="M1771.500 560.500 L1778.500 568.500 M1778.500 560.500 L1771.500 568.500" stroke="#e4f6e6" stroke-width="1.500"/>
 </svg>
</div>
<div class="t" style="left:36.00px;top:523px;font-size:11px;line-height:14px;transform:scaleX(1.0429);font-weight:bold">Shading</div>
<div class="t" style="left:36.00px;top:560px;font-size:11px;line-height:14px;transform:scaleX(0.9817);font-weight:bold">Color</div>
<div class="t" style="left:36.00px;top:597px;font-size:11px;line-height:14px;transform:scaleX(1.0489);font-weight:bold">Back-Face</div>
<div class="p btn" style="left:210px;top:521px;width:33px;height:17px"></div>
<div class="p btn" style="left:210px;top:558px;width:33px;height:17px"></div>
<div class="p btn" style="left:210px;top:595px;width:41px;height:17px"></div>
<div class="t" style="left:216.80px;top:524px;font-size:11px;line-height:14px;transform:scaleX(1.0353);">Vert</div><div class="t" style="left:248.50px;top:523px;font-size:11px;line-height:14px;transform:scaleX(0.9327);">Face</div><div class="t" style="left:284.40px;top:523px;font-size:11px;line-height:14px;transform:scaleX(0.9473);">None</div>
<div class="t" style="left:216.80px;top:561px;font-size:11px;line-height:14px;transform:scaleX(1.0353);">Vert</div><div class="t" style="left:248.50px;top:560px;font-size:11px;line-height:14px;transform:scaleX(0.9260);">Mesh</div><div class="t" style="left:286.60px;top:560px;font-size:11px;line-height:14px;transform:scaleX(0.9678);">User-Def</div>
<div class="t" style="left:216.60px;top:598px;font-size:11px;line-height:14px;transform:scaleX(0.9061);">Single</div><div class="t" style="left:256.50px;top:597px;font-size:11px;line-height:14px;transform:scaleX(0.9413);">Double</div><div class="t" style="left:302.10px;top:597px;font-size:11px;line-height:14px;transform:scaleX(0.9424);">Fancy</div>
<div class="t" style="left:251.70px;top:671px;font-size:11px;line-height:14px;transform:scaleX(0.9664);">apply to all visible</div>
<div class="p" style="left:16px;top:694px;width:321px;height:2px;border-top:1px solid #dcdcdc;border-bottom:1px solid #fbfbfb"></div>
<div class="p" style="left:15px;top:714px;width:322px;height:208px;background:#fff;border:1px solid #abadb3;border-color:#a9abb1 #e2e3ea #e3e9ef #dcdfe5;border-right:none"></div>
<div class="t" style="left:21.00px;top:718px;font-size:13.33px;line-height:17px;font-family:'Liberation Mono',monospace;color:#868686">Opened mesh E:/Downloads/</div>
<div class="t" style="left:21.00px;top:731px;font-size:13.33px;line-height:17px;font-family:'Liberation Mono',monospace;color:#868686">911b3375909ff4a3044d6eaebf441336.obj in</div>
<div class="t" style="left:21.00px;top:744px;font-size:13.33px;line-height:17px;font-family:'Liberation Mono',monospace;color:#868686">msec</div>
<div class="t" style="left:21.00px;top:757px;font-size:13.33px;line-height:17px;font-family:'Liberation Mono',monospace;color:#868686">All files opened in 812 msec</div>

</div>
<div id="status" class="abs">
<div class="p pb" style="left:803px;top:4px;width:771px;height:20px"></div>
<div class="p" style="left:1609.500px;top:3px;width:1px;height:20px;background:#d0d0d0"></div>
<div class="p pb" style="left:1613px;top:4px;width:177px;height:20px"></div>
<div class="p" style="left:1614px;top:5px;width:15px;height:18px;background:linear-gradient(#c8f5c8 0,#7fe685 2px,#52dc5c 5px,#1cc42c 6.5px,#12bd24 100%)"></div>
<div class="t" style="left:1792.60px;top:8px;font-size:12px;line-height:16px;transform:scaleX(0.9692);">Mem 9% 5</div>

</div>
<div id="menu1" class="abs menu" style="left:81px;top:38px;width:350px;height:409px;border-top:none">
<div class="gut"></div>
<div class="hl" style="left:2px;top:341px;width:344px"></div>
<div class="t" style="left:34.30px;top:6px;font-size:12px;line-height:16px;letter-spacing:0.116px;color:#8a8a8a">Apply filter</div><div class="t" style="left:296.50px;top:6px;font-size:12px;line-height:16px;transform:scaleX(0.9653);color:#8a8a8a">Ctrl+P</div>
<div class="t" style="left:34.30px;top:28px;font-size:12px;line-height:16px;letter-spacing:-0.047px;">Show current filter script</div>
<div style="left:30px;right:2px;top:51px;height:2px;border-top:1px solid #e0e0e0;border-bottom:1px solid #fff"></div>
<div class="t" style="left:34.30px;top:59px;font-size:12px;line-height:16px;transform:scaleX(0.9673);">Selection</div><div class="ar" style="left:329.7px;top:61.3px"></div>
<div class="t" style="left:34.30px;top:81px;font-size:12px;line-height:16px;transform:scaleX(0.9820);">Cleaning and Repairing</div><div class="ar" style="left:329.7px;top:83.3px"></div>
<div class="t" style="left:34.30px;top:103px;font-size:12px;line-height:16px;transform:scaleX(0.9576);">Create New Mesh Layer</div><div class="ar" style="left:329.7px;top:105.3px"></div>
<div class="t" style="left:34.30px;top:125px;font-size:12px;line-height:16px;letter-spacing:-0.017px;">Remeshing, Simplification and Reconstruction</div><div class="ar" style="left:329.7px;top:127.3px"></div>
<div class="t" style="left:34.30px;top:147px;font-size:12px;line-height:16px;letter-spacing:-0.066px;">Polygonal and Quad Mesh</div><div class="ar" style="left:329.7px;top:149.3px"></div>
<div class="t" style="left:34.30px;top:169px;font-size:12px;line-height:16px;transform:scaleX(0.9788);">Color Creation and Processing</div><div class="ar" style="left:329.7px;top:171.3px"></div>
<div class="t" style="left:34.30px;top:191px;font-size:12px;line-height:16px;letter-spacing:0.037px;">Smoothing, Fairing and Deformation</div><div class="ar" style="left:329.7px;top:193.3px"></div>
<div class="t" style="left:34.30px;top:213px;font-size:12px;line-height:16px;letter-spacing:-0.019px;">Quality Measure and Computations</div><div class="ar" style="left:329.7px;top:215.3px"></div>
<div class="t" style="left:34.30px;top:235px;font-size:12px;line-height:16px;letter-spacing:-0.042px;">Normals, Curvatures and Orientation</div><div class="ar" style="left:329.7px;top:237.3px"></div>
<div class="t" style="left:34.30px;top:257px;font-size:12px;line-height:16px;transform:scaleX(0.9506);">Mesh Layer</div><div class="ar" style="left:329.7px;top:259.3px"></div>
<div class="t" style="left:34.30px;top:279px;font-size:12px;line-height:16px;transform:scaleX(0.9112);">Raster Layer</div><div class="ar" style="left:329.7px;top:281.3px"></div>
<div class="t" style="left:34.30px;top:301px;font-size:12px;line-height:16px;transform:scaleX(0.9525);">Range Map</div><div class="ar" style="left:329.7px;top:303.3px"></div>
<div class="t" style="left:34.30px;top:323px;font-size:12px;line-height:16px;transform:scaleX(0.9400);">Point Set</div><div class="ar" style="left:329.7px;top:325.3px"></div>
<div class="t" style="left:34.30px;top:345px;font-size:12px;line-height:16px;letter-spacing:0.007px;">Sampling</div><div class="ar" style="left:329.7px;top:347.3px"></div>
<div class="t" style="left:34.30px;top:367px;font-size:12px;line-height:16px;transform:scaleX(0.9804);">Texture</div><div class="ar" style="left:329.7px;top:369.3px"></div>
<div class="t" style="left:34.30px;top:389px;font-size:12px;line-height:16px;transform:scaleX(0.9324);">Camera</div><div class="ar" style="left:329.7px;top:391.3px"></div>

</div>
<div id="menu2" class="abs menu" style="left:424px;top:379px;width:221px;height:314px">
<div class="gut"></div>
<div class="hl" style="left:2px;top:266px;width:215px"></div>
<div class="t" style="left:34.10px;top:6px;font-size:12px;line-height:16px;transform:scaleX(0.9736);">Clustered Vertex Subsampling</div>
<div class="t" style="left:34.10px;top:28px;font-size:12px;line-height:16px;transform:scaleX(0.9765);">Disk Vertex Coloring</div>
<div class="t" style="left:34.10px;top:50px;font-size:12px;line-height:16px;transform:scaleX(0.9750);">Distance from Reference Mesh</div>
<div class="t" style="left:34.10px;top:72px;font-size:12px;line-height:16px;letter-spacing:0.146px;">Dust Accumulation</div>
<div class="t" style="left:34.10px;top:94px;font-size:12px;line-height:16px;letter-spacing:-0.056px;">Hausdorff Distance</div>
<div class="t" style="left:34.10px;top:116px;font-size:12px;line-height:16px;transform:scaleX(0.9843);">Mesh Element Subsampling</div>
<div class="t" style="left:34.10px;top:138px;font-size:12px;line-height:16px;letter-spacing:0.092px;">Montecarlo Sampling</div>
<div class="t" style="left:34.10px;top:160px;font-size:12px;line-height:16px;letter-spacing:0.116px;">Point Cloud Simplification</div>
<div class="t" style="left:34.10px;top:182px;font-size:12px;line-height:16px;letter-spacing:-0.071px;">Poisson-disk Sampling</div>
<div class="t" style="left:34.10px;top:204px;font-size:12px;line-height:16px;transform:scaleX(0.9597);">Regular Recursive Sampling</div>
<div class="t" style="left:34.10px;top:226px;font-size:12px;line-height:16px;letter-spacing:-0.036px;">Stratified Triangle Sampling</div>
<div class="t" style="left:34.10px;top:248px;font-size:12px;line-height:16px;transform:scaleX(0.9839);">Texel Sampling</div>
<div class="t" style="left:34.10px;top:270px;font-size:12px;line-height:16px;letter-spacing:-0.076px;">Vertex Attribute Transfer</div>
<div class="t" style="left:34.10px;top:292px;font-size:12px;line-height:16px;transform:scaleX(0.9761);">Voronoi Vertex Coloring</div>

</div>
<div id="tip" class="abs">
<div class="t" style="left:5.10px;top:1px;font-size:12px;line-height:16px;letter-spacing:-0.050px;">Transfer the choosen per-vertex attributes from one</div>
<div class="t" style="left:5.10px;top:16px;font-size:12px;line-height:16px;letter-spacing:0.002px;">mesh to another. Useful to transfer attributes to different</div>
<div class="t" style="left:5.10px;top:31px;font-size:12px;line-height:16px;transform:scaleX(0.9780);">representations of a same object.</div>
<div class="t" style="left:5.10px;top:46px;font-size:12px;line-height:16px;transform:scaleX(0.9837);">For each vertex of the target mesh the closest point (not</div>
<div class="t" style="left:5.10px;top:61px;font-size:12px;line-height:16px;transform:scaleX(0.9829);">vertex!) on the source mesh is computed, and the</div>
<div class="t" style="left:5.10px;top:76px;font-size:12px;line-height:16px;letter-spacing:0.021px;">requested interpolated attributes from that source point</div>
<div class="t" style="left:5.10px;top:91px;font-size:12px;line-height:16px;letter-spacing:-0.075px;">are copied into the target vertex.</div>
<div class="t" style="left:5.10px;top:106px;font-size:12px;line-height:16px;transform:scaleX(0.9803);">The algorithm assumes that the two meshes are</div>
<div class="t" style="left:5.10px;top:121px;font-size:12px;line-height:16px;transform:scaleX(0.9788);">reasonably similar and aligned.</div>
<div class="t" style="left:5.10px;top:151px;font-size:12px;line-height:16px;letter-spacing:0.016px;font-weight:bold;font-style:italic">(filter_sampling.dll)</div>

</div>
</div>
</body>
</html>
